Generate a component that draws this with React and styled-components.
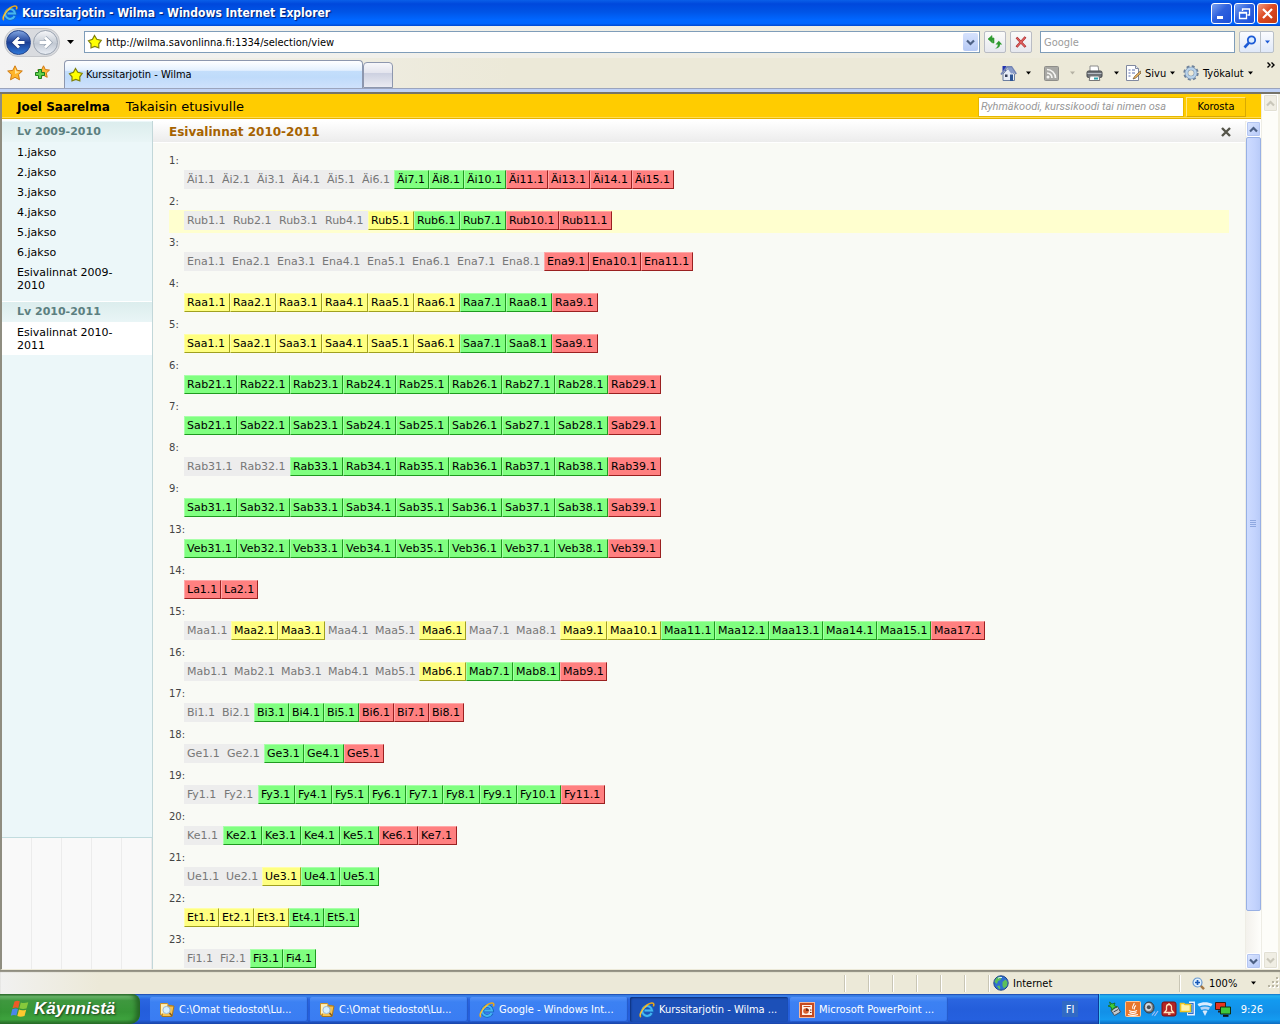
import React from "react";
import styled, { createGlobalStyle, css } from "styled-components";

const verdana = `"DejaVu Sans", Verdana, sans-serif`;
const tahoma = `"DejaVu Sans Condensed", "DejaVu Sans", Tahoma, sans-serif`;

const GlobalStyle = createGlobalStyle`
  *, *::before, *::after { box-sizing: border-box; }
  html, body, #root { height: 100%; }
  body { margin: 0; overflow: hidden; font-family: ${verdana}; font-size: 11px; color: #000; background: #ece9d8; }
  button, input { font: inherit; color: inherit; margin: 0; }
  button { padding: 0; cursor: pointer; }
  a { color: inherit; text-decoration: none; }
  ul, ol { list-style: none; margin: 0; padding: 0; }
  svg { display: block; flex: none; }
`;

/* ---------- window frame ---------- */

const Desktop = styled.div`
  height: 100%;
  display: flex;
  flex-direction: column;
  overflow: hidden;
`;

const TitleBar = styled.header`
  flex: none;
  height: 26px;
  display: flex;
  align-items: center;
  gap: 4px;
  padding: 0 2px;
  background: linear-gradient(#0a5fe8 0, #0048dc 15%, #0054e6 45%, #0066ff 75%, #0066ff 90%, #0048d0 100%);
`;

const WindowTitle = styled.h1`
  flex: 1;
  margin: 0;
  font: bold 12px/16px ${tahoma};
  color: #fff;
  text-shadow: 1px 1px 1px #001a70;
  white-space: nowrap;
`;

const WindowButtons = styled.div`
  display: flex;
  gap: 2px;
`;

const WindowButton = styled.button`
  width: 21px;
  height: 21px;
  display: grid;
  place-items: center;
  border: 1px solid #fff;
  border-radius: 3px;
  background: ${(p) =>
    p.$close
      ? "linear-gradient(135deg, #f09a80, #dd4a22 45%, #c03a14)"
      : "linear-gradient(135deg, #7ba2f0, #2f62de 45%, #1c50d8)"};
`;

const NavBar = styled.div`
  flex: none;
  height: 32px;
  display: flex;
  align-items: center;
  padding: 0 6px 0 4px;
  font-family: ${tahoma};
  background: linear-gradient(90deg, #f3f3f3, #ece9d8);
`;

const NavPill = styled.div`
  display: flex;
  gap: 2px;
  padding: 1px;
  border: 1px solid #c4c6ca;
  border-radius: 14px;
  background: #d9dbdf;
`;

const RoundButton = styled.button`
  width: 25px;
  height: 25px;
  display: grid;
  place-items: center;
  border: 1px solid ${(p) => (p.$forward ? "#9aa3b0" : "#26468c")};
  border-radius: 50%;
  background: ${(p) =>
    p.$forward
      ? "linear-gradient(#f5f6f8, #c2c9d3 55%, #e8edf4)"
      : "linear-gradient(#7fa3e0, #1c3f95 50%, #2f78d8)"};
`;

const PlainButton = styled.button`
  display: flex;
  flex: none;
  align-items: center;
  justify-content: ${(p) => (p.$labelled ? "flex-start" : "center")};
  gap: 4px;
  border: 0;
  background: none;
  white-space: nowrap;
  width: ${(p) => p.$w}px;
  height: 24px;
`;

const OverflowButton = styled(PlainButton)`
  align-self: flex-start;
  height: 14px;
`;

const AddressBox = styled.label`
  flex: 1;
  height: 22px;
  display: flex;
  align-items: center;
  gap: 2px;
  margin-left: 4px;
  padding: 0 1px 0 2px;
  border: 1px solid #7f9db9;
  background: #fff;
`;

const BareInput = styled.input`
  flex: 1;
  min-width: 0;
  border: 0;
  padding: 0 1px;
  outline: 0;
  background: none;
  &::placeholder { color: #9c9c9c; opacity: 1; }
`;

const DropButton = styled.button`
  width: 15px;
  height: 18px;
  display: grid;
  place-items: center;
  border: 0;
  border-radius: 2px;
  background: linear-gradient(#d6e2fd, #b7caf5);
`;

const SquareButton = styled.button`
  width: 22px;
  height: 22px;
  display: grid;
  place-items: center;
  margin-left: 4px;
  border: 1px solid #b9bcc4;
  border-radius: 2px;
  background: linear-gradient(#fbfbf9, #e6e8ef);
`;

const SearchBox = styled.label`
  width: 195px;
  height: 22px;
  display: flex;
  align-items: center;
  margin: 0 4px 0 8px;
  padding: 0 1px 0 2px;
  border: 1px solid #7f9db9;
  background: #fff;
`;

const SplitButton = styled.div`
  display: flex;
  height: 22px;
  border: 1px solid #b9c0c8;
  border-radius: 2px;
  background: linear-gradient(#fbfcff, #dfe8f8);
  button { border: 0; background: none; display: grid; place-items: center; height: 20px; }
  button:first-child { width: 21px; border-right: 1px solid #b9c0c8; }
  button:last-child { width: 12px; }
`;

const TabRow = styled.div`
  flex: none;
  height: 30px;
  display: flex;
  align-items: flex-end;
  padding-left: 2px;
  font-family: ${tahoma};
  background: linear-gradient(90deg, #f3f3f3, #ece9d8 40%);
`;

const FavButtons = styled.div`
  display: flex;
  align-items: center;
  gap: 2px;
  height: 30px;
  width: 62px;
`;

const BrowserTab = styled.button`
  width: 299px;
  height: 28px;
  display: flex;
  align-items: center;
  gap: 2px;
  padding: 0 3px;
  border: 1px solid #8d97ae;
  border-bottom: 0;
  border-radius: 4px 4px 0 0;
  background: linear-gradient(#fff 0, #e4f0fe 35%, #c4defb 36%, #bfdbfa 60%, #cfe1fc 100%);
`;

const NewTab = styled.button`
  width: 30px;
  height: 26px;
  border: 1px solid #8d97ae;
  border-radius: 4px 4px 0 0;
  background: linear-gradient(#f7f7fa 0, #e4e5ee 40%, #ccd0e0 42%, #eaebf2 100%);
`;

const CommandBar = styled.div`
  flex: 1;
  height: 30px;
  display: flex;
  justify-content: flex-end;
  align-items: center;
  padding-right: 3px;
`;

const FrameEdge = styled.div`
  flex: none;
  height: 6px;
  border-top: 1px solid #9ba4bd;
  border-bottom: 2px solid #76746a;
  background: #c0d2f6;
`;

/* ---------- page ---------- */

const Viewport = styled.div`
  flex: 1;
  min-height: 0;
  display: flex;
  border-left: 2px solid #8f8d80;
  border-right: 2px solid #f1efe2;
  border-bottom: 1px solid #ece9d8;
  background: #f9faf5;
`;

const Page = styled.div`
  flex: 1;
  min-width: 0;
  display: flex;
  flex-direction: column;
`;

const TopBar = styled.div`
  flex: none;
  height: 27px;
  display: flex;
  align-items: center;
  gap: 16px;
  padding: 0 15px;
  font-size: 13px;
  line-height: 16px;
  background: #fc0;
  border-bottom: 2px solid #fff;
  box-shadow: inset 0 -1px 0 #e6b400, inset 0 -2px 0 #ffdc50;
`;

const UserName = styled.strong`
  font-size: 12px;
`;

const CourseSearch = styled.form`
  margin-left: auto;
  display: flex;
  gap: 2px;
  font-size: 11px;
  input {
    width: 206px;
    height: 20px;
    padding: 0 2px;
    border: 1px solid #e6b800;
    background: #fff;
    outline: 0;
    font: italic 11px Roboto, ${tahoma};
  }
  input::placeholder { color: #999; opacity: 1; }
  button {
    width: 60px;
    height: 20px;
    border: 1px solid;
    border-color: #ffe680 #d9a900 #d9a900 #ffe680;
    background: #fc0;
    font-family: ${tahoma};
  }
`;

const Columns = styled.div`
  flex: 1;
  min-height: 0;
  display: flex;
`;

const Sidebar = styled.nav`
  flex: none;
  width: 151px;
  display: flex;
  flex-direction: column;
  padding-top: 1px;
  border-right: 1px solid #c2d7d9;
  background: #ecf7f9;
`;

const SideGroup = styled.section`
  & + & { border-top: 1px solid #fff; margin-top: 6px; }
`;

const SideHeading = styled.h2`
  margin: 0;
  height: 20px;
  padding: 0 15px;
  font-size: 11px;
  font-weight: bold;
  line-height: 20px;
  color: #5c7f80;
  background: linear-gradient(#dceded, #e9f5f6);
`;

const SideLink = styled.a`
  display: block;
  padding: 4px 30px 3px 15px;
  line-height: 13px;
  background: ${(p) => (p.$active ? "#fff" : "none")};
`;

const SideStripes = styled.div`
  height: 132px;
  margin-top: auto;
  border-top: 1px solid #c2dcde;
  background: repeating-linear-gradient(90deg, #f9f9f9 0, #f9f9f9 29px, #ececec 29px, #ececec 30px);
`;

const Content = styled.main`
  flex: 1;
  min-width: 0;
  display: flex;
  flex-direction: column;
`;

const ContentHeader = styled.div`
  flex: none;
  height: 21px;
  display: flex;
  align-items: center;
  justify-content: space-between;
  padding: 0 11px 0 16px;
  background: linear-gradient(#fff, #ececec);
`;

const ContentTitle = styled.h2`
  margin: 0;
  font-size: 12px;
  line-height: 16px;
  color: #a66300;
`;

const CloseButton = styled.button`
  width: 16px;
  height: 16px;
  display: grid;
  place-items: center;
  border: 0;
  background: none;
`;

const PeriodList = styled.ol`
  flex: 1;
  min-height: 0;
  overflow: hidden;
  padding: 8px 16px 0;
  border-top: 1px solid #fff;
`;

const PeriodLabel = styled.div`
  height: 18px;
  font-size: 10px;
  line-height: 20px;
  color: #444;
`;

const CourseRow = styled.ul`
  height: 23px;
  display: flex;
  padding: 1px 0 0 15px;
  background: ${(p) => (p.$highlight ? "#ffffcf" : "none")};
`;

const chipColours = {
  g: css`color: #777; background: #ededed; border-color: #ededed;`,
  y: css`background: #ffff80; border-color: #ffffa8 #a0a020 #a0a020 #ffffa8;`,
  v: css`background: #80ff80; border-color: #a8ffa8 #209a20 #209a20 #a8ffa8;`,
  r: css`background: #ff8080; border-color: #ffa8a8 #9a2020 #9a2020 #ffa8a8;`,
};

const Chip = styled.a`
  display: block;
  min-width: ${(p) => p.$w}px;
  height: 19px;
  padding: 0 2px;
  border: 1px solid;
  line-height: 18px;
  white-space: nowrap;
  ${(p) => chipColours[p.$state]}
`;

/* ---------- scroll bars ---------- */

const ScrollBar = styled.div`
  flex: none;
  width: ${(p) => (p.$disabled ? 17 : 16)}px;
  display: flex;
  flex-direction: column;
  align-items: center;
  justify-content: space-between;
  border-left: 1px solid #eeede5;
  background: ${(p) => (p.$disabled ? "#fdfdf9" : "linear-gradient(90deg, #f3f1ec, #fefefb)")};
`;

const ScrollButton = styled.button`
  flex: none;
  width: 15px;
  height: ${(p) => (p.$disabled ? 18 : 16)}px;
  display: grid;
  place-items: center;
  border: 1px solid #fff;
  border-radius: 2px;
  background: ${(p) => (p.$disabled ? "#f0eee4" : "linear-gradient(135deg, #dbe6ff, #b6c9f8)")};
  box-shadow: inset 0 0 0 1px ${(p) => (p.$disabled ? "#e2e0d4" : "#b4c6f2")};
`;

const ScrollTrack = styled.div`
  flex: 1;
  padding-bottom: 42px;
  display: flex;
`;

const ScrollThumb = styled.div`
  width: 15px;
  display: grid;
  place-items: center;
  border: 1px solid #98b0e4;
  border-radius: 2px;
  background: linear-gradient(90deg, #cddbff, #c3d3fd 60%, #b9cbf8);
`;

/* ---------- status bar and task bar ---------- */

const StatusBar = styled.div`
  flex: none;
  height: 24px;
  display: flex;
  align-items: center;
  padding: 2px 0 0;
  font-family: ${tahoma};
  box-shadow: inset 0 2px 1px #8f8d80;
  background: linear-gradient(90deg, #f1f1f0, #ece9d8 100px);
`;

const StatusCell = styled.div`
  width: ${(p) => (p.$w ? `${p.$w}px` : "auto")};
  flex: ${(p) => (p.$w ? "none" : 1)};
  height: 17px;
  display: flex;
  align-items: center;
  gap: 4px;
  padding-left: ${(p) => p.$pad || 0}px;
  border-right: 1px solid ${(p) => (p.$last ? "transparent" : "#c9c6b5")};
  box-shadow: ${(p) => (p.$last ? "none" : "1px 0 0 #fff")};
`;

const TaskBar = styled.footer`
  flex: none;
  height: 30px;
  display: flex;
  align-items: stretch;
  font-family: ${tahoma};
  color: #fff;
  background: linear-gradient(#1941a5 0, #3d86ec 6%, #2a65e0 18%, #245edb 50%, #2560df 85%, #1a45a8 100%);
`;

const StartButton = styled.button`
  width: 140px;
  display: flex;
  align-items: center;
  gap: 4px;
  padding-left: 10px;
  border: 0;
  border-radius: 0 8px 10px 0;
  background: linear-gradient(#2f6f2f 0, #6fbb6f 8%, #3f983f 22%, #369636 60%, #3ea33e 85%, #2a6f2a 100%);
  box-shadow: inset -4px 0 5px #256525;
  font: italic bold 17px "Liberation Sans", Arial, sans-serif;
  text-shadow: 1px 1px 2px #1c3c1c;
`;

const Tasks = styled.div`
  flex: 1;
  min-width: 0;
  display: flex;
  gap: 2px;
  padding: 3px 0 2px 10px;
`;

const Task = styled.button`
  width: 158px;
  display: flex;
  align-items: center;
  gap: 4px;
  padding: 0 9px;
  border: 0;
  border-radius: 2px;
  white-space: nowrap;
  text-align: left;
  background: ${(p) => (p.$active ? "#1c50b8" : "linear-gradient(#5592f7, #3c81f3 20%, #3a7cf2)")};
  box-shadow: ${(p) => (p.$active ? "inset 1px 1px 2px #0d2f78" : "inset -1px -1px 1px #2458c8")};
`;

const Language = styled.button`
  align-self: center;
  width: 16px;
  height: 16px;
  margin-right: 20px;
  border: 0;
  background: #316ac5;
`;

const Tray = styled.div`
  width: 182px;
  display: flex;
  align-items: center;
  gap: 2px;
  padding: 0 0 0 8px;
  border-left: 1px solid #0a3a9a;
  box-shadow: inset 1px 0 0 #3fc4f5;
  background: linear-gradient(#0f6fc8 0, #22b1f0 6%, #129af0 20%, #1290e8 60%, #149bf0 85%, #0d6cc0 100%);
`;

const Clock = styled.time`
  margin-left: auto;
  padding-right: 17px;
`;

/* ---------- icons ---------- */

const Svg = ({ w = 16, h = w, box, children }) => (
  <svg width={w} height={h} viewBox={box || `0 0 ${w} ${h}`} aria-hidden="true">{children}</svg>
);

const Caret = ({ color = "#000", w = 7 }) => (
  <Svg w={w} h={4} box="0 0 7 4"><path d="M0 0h7L3.5 4z" fill={color} /></Svg>
);

const Chevron = ({ up, color = "#4d6185" }) => (
  <Svg w={9} h={7}>
    <path d={up ? "M1 5.5 4.500 2 8 5.500" : "M1 1.500 4.500 5 8 1.500"} fill="none" stroke={color} strokeWidth="2.200" />
  </Svg>
);

const ExplorerIcon = () => (
  <Svg>
    <path d="M12.800 11.200A5 5 0 1 1 13.300 8.600H5.500" fill="none" stroke="#1668c0" strokeWidth="3.400" />
    <path d="M12.600 11A4.900 4.900 0 1 1 13 8.500H5.500" fill="none" stroke="#45b6f2" strokeWidth="2" />
    <path d="M2 15C-.5 13.500 3 6.500 8 3c3.500-2.500 6.500-2.600 6.800-.8.100.7-.1 1.400-.5 2.200" fill="none" stroke="#e8a818" strokeWidth="1.600" />
    <path d="M1.700 13.500C1.200 11 4.500 6 8.500 3.300" fill="none" stroke="#ffe070" strokeWidth=".7" />
  </Svg>
);

const SiteStar = () => (
  <Svg>
    <path d="M7.500 1.500 9.800 5.300 14.200 6.300 11.800 9.800V13.800L7.800 12.500 4 13.800V9.800L1.500 6.800 5.500 5.300z" fill="#ff0" stroke="#80800a" strokeWidth="1.200" />
  </Svg>
);

const FavStar = () => (
  <Svg>
    <path d="M8 .8 10.200 5.400 15.300 6 11.500 9.600 12.500 14.800 8 12.300 3.500 14.800 4.500 9.600.7 6 5.800 5.400z" fill="#ffb52a" stroke="#d07a12" />
    <path d="M8 3 9.400 6.300 13 6.700 8 9z" fill="#ffe39a" />
  </Svg>
);

const AddFav = () => (
  <Svg>
    <path d="M9.500.8 11.300 4.600 15.500 5.100 12.300 8 13.200 12.300 9.500 10.200 5.800 12.300 6.500 8 3.500 5.100 7.700 4.600z" fill="#ffb93a" stroke="#d07a12" />
    <path d="M4.500 4.500h3V7.500H10.500V10.500H7.500v3h-3v-3H1.500V7.500h3z" fill="#5fd04a" stroke="#1e7d1e" />
  </Svg>
);

const ArrowIcon = ({ right }) => (
  <Svg w={15}>
    <g transform={right ? "rotate(180 7.500 7.500)" : undefined}>
      <path d="M8 2.500 3 7.500 8 12.500M3.500 7.500H13.500" fill="none" stroke={right ? "#97a3b2" : "#173278"} strokeWidth="4.200" />
      <path d="M8 2.500 3 7.500 8 12.500M3.500 7.500H13.500" fill="none" stroke="#fff" strokeWidth="2.800" />
    </g>
  </Svg>
);

const RefreshIcon = () => (
  <Svg>
    <path d="M5 1.500V8.500L1 5zM4.500 4H7V9H5.500V6H4.500z" fill="#2f9b2f" stroke="#2f9b2f" strokeWidth=".6" />
    <path d="M15.200 10.500 11.800 6.800 8.500 10.500H10.800C10.800 12.500 10 13.500 8 14.500 11.500 14.300 13 13 13 10.500z" fill="#2f9b2f" />
  </Svg>
);

const StopIcon = () => (
  <Svg w={14}>
    <path d="M2.500 2.500 11.500 12M11.500 2 2.500 12" stroke="#a82c2c" strokeWidth="2.400" />
    <path d="M2.800 2.800 11 11.500M11 2.500 3 11.500" stroke="#e06060" strokeWidth="1.200" />
  </Svg>
);

const SearchIcon = () => (
  <Svg w={14}>
    <circle cx="8.500" cy="5" r="3.700" fill="#dcecff" stroke="#1d5bd6" strokeWidth="1.800" />
    <path d="M5.800 7.800 1.500 12.500" stroke="#1d5bd6" strokeWidth="2.600" />
  </Svg>
);

const HomeIcon = () => (
  <Svg w={17}>
    <path d="M2.500 1h3.500v5H2.500z" fill="#2233b0" />
    <path d="M3 9 8 3.500 14.500 9V15.500H3z" fill="#e6ecf5" stroke="#6d7fa0" />
    <path d="M1 9.500 7 2 11.500 2 16.200 9" fill="none" stroke="#7384b4" strokeWidth="1.800" />
    <path d="M7 2.500h4.500L15 8 11 8.500z" fill="#8a9cc8" />
    <path d="M10 9.500h3V16h-3z" fill="#2c5494" />
    <path d="M5 9.500h2.500v2.500H5z" fill="#333c55" />
  </Svg>
);

const FeedIcon = () => (
  <Svg w={15}>
    <rect x=".5" y=".5" width="14" height="14" rx="1" fill="#a9a9a5" stroke="#8e8e8a" />
    <circle cx="4" cy="11" r="1.500" fill="#f5f5f2" />
    <path d="M3 7A5 5 0 0 1 8 12M3 3.500A8.500 8.500 0 0 1 11.500 12" fill="none" stroke="#f5f5f2" strokeWidth="1.700" />
  </Svg>
);

const PrinterIcon = () => (
  <Svg w={17}>
    <path d="M4 1h8l1 6H4z" fill="#fff" stroke="#8b8b8b" />
    <rect x="1" y="6" width="15" height="6.500" rx="1.500" fill="#6e7278" stroke="#45484c" />
    <path d="M1.500 8.500h14" stroke="#b7bcc2" />
    <path d="M4 11h9l.8 4.500H3.200z" fill="#fff" stroke="#777" />
    <path d="M8 12.500h4v2H8z" fill="#2a9fa8" />
  </Svg>
);

const PageIcon = () => (
  <Svg>
    <path d="M1.500.5h9l3 3v12h-12z" fill="#fff" stroke="#8089a0" />
    <path d="M10.500.5v3h3" fill="#e4e8f0" stroke="#8089a0" />
    <path d="M3.500 5h2M7 5h3M3.500 8h2M7 8h3M3.500 11h2" stroke="#5b6fae" />
    <path d="M15.300 6 9.500 11.500 8 14 10.800 13 16 8z" fill="#e8b260" stroke="#6c5330" strokeWidth=".7" />
  </Svg>
);

const GearIcon = () => (
  <Svg>
    <circle cx="8" cy="8" r="6.400" fill="none" stroke="#6d8199" strokeWidth="2.600" strokeDasharray="2.800 2.220" />
    <circle cx="8" cy="8" r="4.500" fill="none" stroke="#7a93b0" strokeWidth="3.600" />
    <circle cx="8" cy="8" r="4.500" fill="none" stroke="#b9d3ea" strokeWidth="2.400" />
    <circle cx="8" cy="8" r="2.200" fill="#ece9d8" />
  </Svg>
);

const MoreIcon = () => (
  <Svg w={8} h={6}><path d="M.5.5 3 3 .5 5.500M4.500.5 7 3 4.500 5.500" fill="none" stroke="#000" strokeWidth="1.400" /></Svg>
);

const FolderIcon = () => (
  <Svg>
    <path d="M1.500 1.500h7l1 2H13V13H1.500z" fill="#ffe597" stroke="#c8912a" />
    <path d="M4 4h11L13 14.500H3z" fill="#f5c350" stroke="#a8761c" />
    <path d="M2 2.500h6v9H2z" fill="#fff0b8" />
    <circle cx="7.500" cy="8" r="3.600" fill="#d5efff" stroke="#9ab8d4" />
    <path d="M10.500 11 13 13.800" stroke="#7d5a2a" strokeWidth="1.600" />
  </Svg>
);

const PowerPointIcon = () => (
  <Svg>
    <rect x=".5" y=".5" width="15" height="15" fill="#c64a20" stroke="#f4b79c" />
    <path d="M3 3h10v10H3z" fill="#fff1e8" />
    <path d="M4.500 4.500h7" stroke="#c64a20" />
    <circle cx="7" cy="9" r="2.800" fill="#d8602e" />
    <path d="M7 9V6.200A2.800 2.800 0 0 1 9.800 9z" fill="#7c2a0e" />
    <path d="M11 8h1.500M11 10.500h1.500" stroke="#7c2a0e" />
  </Svg>
);

const WindowsFlag = () => (
  <Svg w={20} h={20}>
    <path d="M4.500 2.500C6.500 1.300 8.300 1.500 9.800 2.300L8.300 9C6.800 8.200 5 8.200 2.500 9.300z" fill="#ee5a28" />
    <path d="M10.800 3.400C12.800 4.200 15 4.200 18.300 3.200L16.500 9.500C14 10.200 11.200 10.100 9.300 9.300z" fill="#86c93c" />
    <path d="M2.200 10.300C4.700 9.300 6.500 9.300 8 10.100L6.300 16.500C4.800 15.700 3 15.700.8 16.700z" fill="#4a86ea" />
    <path d="M9 10.600C10.800 11.400 13.300 11.400 16.200 10.700L14.500 17C11.800 18 9.300 18 7.300 17z" fill="#fcc92f" />
  </Svg>
);

const GlobeIcon = () => (
  <Svg>
    <circle cx="8" cy="8" r="7.200" fill="#2f6fd0" stroke="#1c4488" />
    <path d="M3 3.500C5 1.500 7.500 1.500 8.500 2.500L7.500 5 5 6 4 9 1.500 7zM9.500 7l3-2.500 2 2.500-.5 4-3 2.500L9.500 11zM4 11l2.500-.5 1 2.500L6.500 14.500z" fill="#5cc05a" />
    <path d="M5 3.200A5.500 5.500 0 0 1 9 2.500" fill="none" stroke="#d8f0ff" />
  </Svg>
);

const ZoomIcon = () => (
  <Svg w={13}>
    <path d="M8 8 12 12.200" stroke="#a57540" strokeWidth="2.400" />
    <circle cx="5.500" cy="5.500" r="4.500" fill="#e3f2ff" stroke="#6a9ad0" strokeWidth="1.200" />
    <path d="M5.500 3v5M3 5.500h5" stroke="#1658b8" strokeWidth="1.700" />
  </Svg>
);

const GripIcon = () => (
  <Svg w={12}>
    {[[8, 0], [4, 4], [8, 4], [0, 8], [4, 8], [8, 8]].map(([x, y]) => (
      <g key={`${x}-${y}`}>
        <rect x={x + 1} y={y + 1} width="2" height="2" fill="#fff" />
        <rect x={x} y={y} width="2" height="2" fill="#b8b4a2" />
      </g>
    ))}
  </Svg>
);

const trayIcons = {
  device: <><path d="M4 9.500 10.500 5.500 13.500 11 7.500 14.500z" fill="#c3c9cf" stroke="#46505a" /><path d="M6.500 11 11 8.500" stroke="#39424c" /><path d="M2.500 1 5 3 8 2 7 4.500 10 6 6.500 7 5 9.500 4 6 1 5 3.500 3.800z" fill="#3ed03a" stroke="#14681a" strokeWidth=".8" /></>,
  java: <><rect x=".5" y=".5" width="15" height="15" rx="1" fill="#e8762a" stroke="#ffc796" /><path d="M9 2C10 4 6 5 8 8M11 4.500C8.500 6 10 7 9 8.500M4 9.500c2 1.300 6 1.300 8 0M4.500 11.500c2 1 5 1 7 0M3 13.500c3 1 7 1 10 0" fill="none" stroke="#fff" strokeWidth="1.100" /></>,
  sound: <><ellipse cx="6" cy="6.500" rx="5" ry="5.500" fill="#777d84" stroke="#32373d" /><ellipse cx="5.500" cy="6" rx="3.300" ry="4" fill="#d2d8de" /><circle cx="5.800" cy="6.200" r="2" fill="#4a5056" /><path d="M9 14.500 12 10.500M11.500 15 15 10" stroke="#a0bdf5" strokeWidth="1.200" /></>,
  alert: <><rect x="1" y="1" width="14" height="14" rx="2" fill="#b52525" stroke="#7c1212" /><path d="M3.500 11.500 5.500 9V6a2.500 2.500 0 0 1 5 0V9l2 2.500zM8 2v2M7 13.200h2.500" fill="none" stroke="#ffe6c0" strokeWidth="1.300" /></>,
  display: <><path d="M10 2h4.500v11H8" fill="none" stroke="#e3f0ff" strokeWidth="3" /><path d="M10 2.500h4v10H9" fill="none" stroke="#2b6ad0" strokeWidth="1.200" /><path d="M1.500 2.500h3.500l1 1h5.500v7h-10z" fill="#fff3b0" stroke="#f2c520" strokeWidth="1.600" /></>,
  wifi: <><path d="M.5 3C5 .8 11 .8 15.500 3L14 5.500C10 3.800 6 3.800 2 5.500z" fill="#dcecff" /><path d="M3 6.500C6 5.200 10 5.200 13 6.500L11.500 9C9 8 7 8 4.500 9z" fill="#b7d4f5" /><path d="M5.500 10c1.500-.6 3.500-.6 5 0L8 15z" fill="#d8e9fb" /></>,
  network: <><path d="M.5 1.500h10v7h-10z" fill="#e63320" stroke="#3a1a16" /><path d="M3 10.500h5" stroke="#222" strokeWidth="2" /><path d="M5.500 6h10v7h-10z" fill="#3cc83c" stroke="#12300f" /><path d="M8 14.800h5.500" stroke="#111" strokeWidth="2" /></>,
};

/* ---------- data ---------- */

const sideGroups = [
  { title: "Lv 2009-2010", links: ["1.jakso", "2.jakso", "3.jakso", "4.jakso", "5.jakso", "6.jakso", "Esivalinnat 2009-2010"] },
  { title: "Lv 2010-2011", links: ["Esivalinnat 2010-2011"], active: 0 },
];

/* Runs are "first-last:state"; width is that of a single-digit course. */
const periods = [
  { no: 1, subject: "Äi", width: 35, runs: "1-6:g 7-8:v 10-10:v 11-11:r 13-15:r" },
  { no: 2, subject: "Rub", width: 46, runs: "1-4:g 5-5:y 6-7:v 10-11:r", highlight: true },
  { no: 3, subject: "Ena", width: 45, runs: "1-8:g 9-11:r" },
  { no: 4, subject: "Raa", width: 46, runs: "1-6:y 7-8:v 9-9:r" },
  { no: 5, subject: "Saa", width: 46, runs: "1-6:y 7-8:v 9-9:r" },
  { no: 6, subject: "Rab", width: 46, runs: "21-28:v 29-29:r" },
  { no: 7, subject: "Sab", width: 46, runs: "21-28:v 29-29:r" },
  { no: 8, subject: "Rab", width: 46, runs: "31-32:g 33-38:v 39-39:r" },
  { no: 9, subject: "Sab", width: 46, runs: "31-38:v 39-39:r" },
  { no: 13, subject: "Veb", width: 46, runs: "31-38:v 39-39:r" },
  { no: 14, subject: "La", width: 37, runs: "1-2:r" },
  { no: 15, subject: "Maa", width: 47, runs: "1-1:g 2-3:y 4-5:g 6-6:y 7-8:g 9-10:y 11-15:v 17-17:r" },
  { no: 16, subject: "Mab", width: 47, runs: "1-5:g 6-6:y 7-8:v 9-9:r" },
  { no: 17, subject: "Bi", width: 35, runs: "1-2:g 3-5:v 6-8:r" },
  { no: 18, subject: "Ge", width: 40, runs: "1-2:g 3-4:v 5-5:r" },
  { no: 19, subject: "Fy", width: 37, runs: "1-2:g 3-10:v 11-11:r" },
  { no: 20, subject: "Ke", width: 39, runs: "1-1:g 2-5:v 6-7:r" },
  { no: 21, subject: "Ue", width: 39, runs: "1-2:g 3-3:y 4-5:v" },
  { no: 22, subject: "Et", width: 35, runs: "1-3:y 4-5:v" },
  { no: 23, subject: "Fi", width: 33, runs: "1-2:g 3-4:v" },
];

const DIGIT_WIDTH = 7;

function coursesOf({ subject, width, runs }) {
  return runs.split(" ").flatMap((run) => {
    const [range, state] = run.split(":");
    const [first, last] = range.split("-").map(Number);
    return Array.from({ length: last - first + 1 }, (_, i) => {
      const n = first + i;
      return { name: `${subject}${n}.1`, state, width: width + (n > 9 ? DIGIT_WIDTH : 0) };
    });
  });
}

const tasks = [
  { icon: <FolderIcon />, text: "C:\\Omat tiedostot\\Lu..." },
  { icon: <FolderIcon />, text: "C:\\Omat tiedostot\\Lu..." },
  { icon: <ExplorerIcon />, text: "Google - Windows Int..." },
  { icon: <ExplorerIcon />, text: "Kurssitarjotin - Wilma ...", active: true },
  { icon: <PowerPointIcon />, text: "Microsoft PowerPoint ..." },
];

/* ---------- parts ---------- */

function Period({ period }) {
  return (
    <li>
      <PeriodLabel>{period.no}:</PeriodLabel>
      <CourseRow $highlight={period.highlight}>
        {coursesOf(period).map((c) => (
          <li key={c.name}>
            <Chip href={`#${c.name}`} $w={c.width} $state={c.state}>{c.name}</Chip>
          </li>
        ))}
      </CourseRow>
    </li>
  );
}

export default function App() {
  return (
    <Desktop>
      <GlobalStyle />
      <TitleBar>
        <ExplorerIcon />
        <WindowTitle>Kurssitarjotin - Wilma - Windows Internet Explorer</WindowTitle>
        <WindowButtons>
          <WindowButton aria-label="Pienennä"><Svg w={13}><path d="M2 10.500h6" stroke="#fff" strokeWidth="3" /></Svg></WindowButton>
          <WindowButton aria-label="Palauta">
            <Svg w={13}><path d="M4.500 4V2h7v6H9.500M4 2h8M1.500 5.500h7v6h-7zM1 6h8" fill="none" stroke="#fff" strokeWidth="1.300" /></Svg>
          </WindowButton>
          <WindowButton $close aria-label="Sulje"><Svg w={13}><path d="M2 2 11 11M11 2 2 11" stroke="#fff" strokeWidth="2.200" /></Svg></WindowButton>
        </WindowButtons>
      </TitleBar>

      <NavBar>
        <NavPill>
          <RoundButton aria-label="Edellinen"><ArrowIcon /></RoundButton>
          <RoundButton $forward aria-label="Seuraava"><ArrowIcon right /></RoundButton>
        </NavPill>
        <PlainButton $w={20} aria-label="Viimeisimmät sivut"><Caret /></PlainButton>
        <AddressBox>
          <SiteStar />
          <BareInput aria-label="Osoite" defaultValue="http://wilma.savonlinna.fi:1334/selection/view" />
          <DropButton aria-label="Näytä osoitteet"><Chevron /></DropButton>
        </AddressBox>
        <SquareButton aria-label="Päivitä"><RefreshIcon /></SquareButton>
        <SquareButton aria-label="Pysäytä"><StopIcon /></SquareButton>
        <SearchBox><BareInput aria-label="Haku" placeholder="Google" /></SearchBox>
        <SplitButton>
          <button aria-label="Hae"><SearchIcon /></button>
          <button aria-label="Hakuasetukset"><Caret color="#1d5bd6" w={5} /></button>
        </SplitButton>
      </NavBar>

      <TabRow>
        <FavButtons>
          <PlainButton $w={25} aria-label="Suosikit"><FavStar /></PlainButton>
          <PlainButton $w={25} aria-label="Lisää suosikkeihin"><AddFav /></PlainButton>
        </FavButtons>
        <BrowserTab><SiteStar />Kurssitarjotin - Wilma</BrowserTab>
        <NewTab aria-label="Uusi välilehti" />
        <CommandBar>
          <PlainButton $w={18} aria-label="Aloitussivu"><HomeIcon /></PlainButton>
          <PlainButton $w={22} aria-label="Aloitussivun valikko"><Caret w={5} /></PlainButton>
          <PlainButton $w={24} aria-label="Syötteet"><FeedIcon /></PlainButton>
          <PlainButton $w={18} aria-label="Syötteiden valikko"><Caret w={5} color="#b5b2a4" /></PlainButton>
          <PlainButton $w={26} aria-label="Tulosta"><PrinterIcon /></PlainButton>
          <PlainButton $w={18} aria-label="Tulostusvalikko"><Caret w={5} /></PlainButton>
          <PlainButton $w={58} $labelled><PageIcon />Sivu<Caret w={5} /></PlainButton>
          <PlainButton $w={82} $labelled><GearIcon />Työkalut<Caret w={5} /></PlainButton>
          <OverflowButton $w={12} aria-label="Lisää"><MoreIcon /></OverflowButton>
        </CommandBar>
      </TabRow>
      <FrameEdge />

      <Viewport>
        <Page>
          <TopBar>
            <UserName>Joel Saarelma</UserName>
            <a href="#etusivu">Takaisin etusivulle</a>
            <CourseSearch>
              <input aria-label="Korosta kursseja" placeholder="Ryhmäkoodi, kurssikoodi tai nimen osa" />
              <button type="button">Korosta</button>
            </CourseSearch>
          </TopBar>
          <Columns>
            <Sidebar>
              {sideGroups.map((g) => (
                <SideGroup key={g.title}>
                  <SideHeading>{g.title}</SideHeading>
                  {g.links.map((text, i) => (
                    <SideLink key={text} href={`#${text}`} $active={g.active === i}>{text}</SideLink>
                  ))}
                </SideGroup>
              ))}
              <SideStripes />
            </Sidebar>
            <Content>
              <ContentHeader>
                <ContentTitle>Esivalinnat 2010-2011</ContentTitle>
                <CloseButton aria-label="Sulje näkymä">
                  <Svg w={10}><path d="M1 1 9 9M9 1 1 9" stroke="#55554a" strokeWidth="2.400" /></Svg>
                </CloseButton>
              </ContentHeader>
              <PeriodList>
                {periods.map((p) => <Period key={p.no} period={p} />)}
              </PeriodList>
            </Content>
            <ScrollBar>
              <ScrollButton aria-label="Vieritä ylös"><Chevron up /></ScrollButton>
              <ScrollTrack>
                <ScrollThumb><Svg w={7} h={8}><path d="M0 .5h6M0 2.500h6M0 4.500h6M0 6.500h6" stroke="#8fa8e0" /></Svg></ScrollThumb>
              </ScrollTrack>
              <ScrollButton aria-label="Vieritä alas"><Chevron /></ScrollButton>
            </ScrollBar>
          </Columns>
        </Page>
        <ScrollBar $disabled>
          <ScrollButton $disabled disabled aria-label="Sivu ylös"><Chevron up color="#c9c7ba" /></ScrollButton>
          <ScrollButton $disabled disabled aria-label="Sivu alas"><Chevron color="#c9c7ba" /></ScrollButton>
        </ScrollBar>
      </Viewport>

      <StatusBar>
        <StatusCell />
        <StatusCell $w={24} />
        <StatusCell $w={24} />
        <StatusCell $w={24} />
        <StatusCell $w={24} />
        <StatusCell $w={24} />
        <StatusCell $w={24} />
        <StatusCell $w={191} $pad={4}><GlobeIcon />Internet</StatusCell>
        <StatusCell $w={88} $pad={12} $last><ZoomIcon />100%<PlainButton $w={24} aria-label="Zoomaustaso"><Caret w={5} /></PlainButton></StatusCell>
        <GripIcon />
      </StatusBar>

      <TaskBar>
        <StartButton><WindowsFlag />Käynnistä</StartButton>
        <Tasks>
          {tasks.map((t, i) => <Task key={i} $active={t.active}>{t.icon}{t.text}</Task>)}
        </Tasks>
        <Language>FI</Language>
        <Tray>
          {Object.entries(trayIcons).map(([name, art]) => <Svg key={name}>{art}</Svg>)}
          <Clock>9:26</Clock>
        </Tray>
      </TaskBar>
    </Desktop>
  );
}
